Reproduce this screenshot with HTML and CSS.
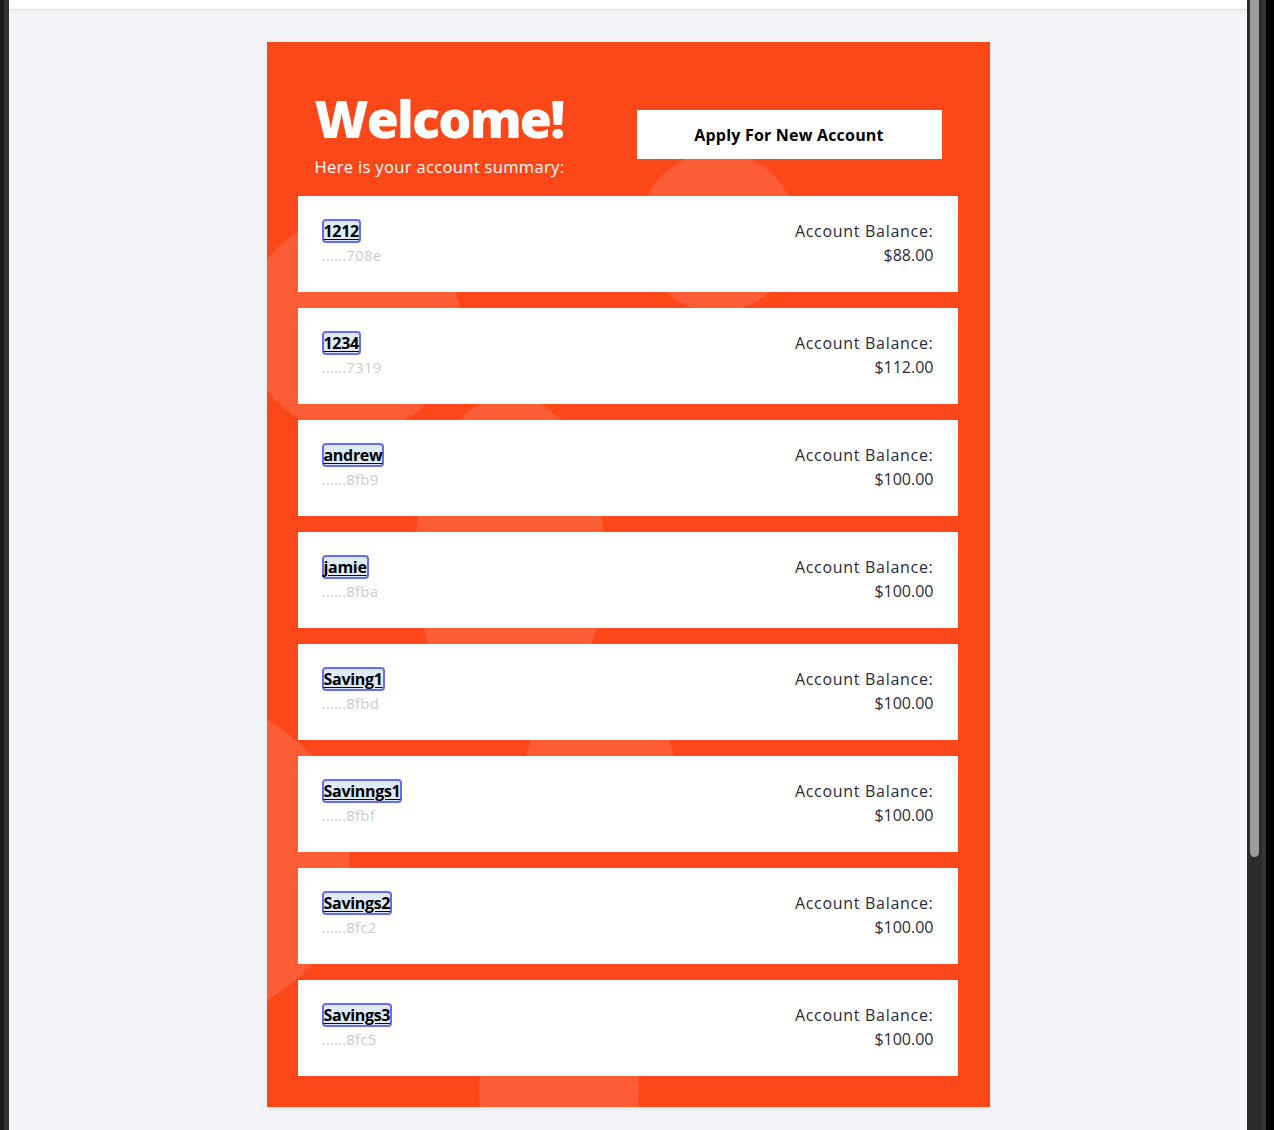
FILE: index.html
```html
<!DOCTYPE html>
<html lang="en">
<head>
<meta charset="utf-8">
<title>Account Summary</title>
<link rel="stylesheet" href="styles.css">
</head>
<body>
<div class="frame">
  <div class="edge-left"></div>
  <div class="viewport">
    <div class="topbar"></div>
    <main class="page">
      <section class="card">
        <div class="bubble bubble-a"></div>
        <div class="bubble bubble-b"></div>
        <div class="bubble bubble-c"></div>
        <div class="bubble bubble-d"></div>
        <div class="bubble bubble-btn"></div>
        <div class="bubble bubble-bottom"></div>

        <header class="card-head">
          <div class="intro">
            <h1 class="title">Welcome!</h1>
            <p class="subtitle">Here is your account summary:</p>
          </div>
          <button class="apply-btn" type="button">Apply For New Account</button>
        </header>

        <ul class="accounts">
          <li class="account">
            <div class="acc-left"><a class="acc-name" href="#">1212</a><span class="acc-id">......708e</span></div>
            <div class="acc-right"><span class="acc-label">Account Balance:</span><span class="acc-amount">$88.00</span></div>
          </li>
          <li class="account">
            <div class="acc-left"><a class="acc-name" href="#">1234</a><span class="acc-id">......7319</span></div>
            <div class="acc-right"><span class="acc-label">Account Balance:</span><span class="acc-amount">$112.00</span></div>
          </li>
          <li class="account">
            <div class="acc-left"><a class="acc-name" href="#">andrew</a><span class="acc-id">......8fb9</span></div>
            <div class="acc-right"><span class="acc-label">Account Balance:</span><span class="acc-amount">$100.00</span></div>
          </li>
          <li class="account">
            <div class="acc-left"><a class="acc-name" href="#">jamie</a><span class="acc-id">......8fba</span></div>
            <div class="acc-right"><span class="acc-label">Account Balance:</span><span class="acc-amount">$100.00</span></div>
          </li>
          <li class="account">
            <div class="acc-left"><a class="acc-name" href="#">Saving1</a><span class="acc-id">......8fbd</span></div>
            <div class="acc-right"><span class="acc-label">Account Balance:</span><span class="acc-amount">$100.00</span></div>
          </li>
          <li class="account">
            <div class="acc-left"><a class="acc-name" href="#">Savinngs1</a><span class="acc-id">......8fbf</span></div>
            <div class="acc-right"><span class="acc-label">Account Balance:</span><span class="acc-amount">$100.00</span></div>
          </li>
          <li class="account">
            <div class="acc-left"><a class="acc-name" href="#">Savings2</a><span class="acc-id">......8fc2</span></div>
            <div class="acc-right"><span class="acc-label">Account Balance:</span><span class="acc-amount">$100.00</span></div>
          </li>
          <li class="account">
            <div class="acc-left"><a class="acc-name" href="#">Savings3</a><span class="acc-id">......8fc5</span></div>
            <div class="acc-right"><span class="acc-label">Account Balance:</span><span class="acc-amount">$100.00</span></div>
          </li>
        </ul>
      </section>
    </main>
  </div>
  <div class="scrollbar"><div class="thumb"></div></div>
</div>
</body>
</html>
```

FILE: styles.css
```css
* { box-sizing: border-box; }

html, body {
  margin: 0;
  padding: 0;
  height: 100%;
}

body {
  font-family: "Open Sans", "Liberation Sans", sans-serif;
  background: #f4f5f9;
  overflow: hidden;
}

.frame {
  display: flex;
  width: 1274px;
  height: 1130px;
}

.edge-left {
  width: 9px;
  flex: 0 0 9px;
  background: linear-gradient(to right, #1b1b1b 0 4px, #343434 4px 9px);
}

.viewport {
  flex: 1;
  display: flex;
  flex-direction: column;
  background: #f4f5f9;
  min-width: 0;
}

.topbar {
  height: 10px;
  flex: 0 0 10px;
  background: #ffffff;
  border-bottom: 1px solid #e1e2e8;
  box-shadow: 0 2px 8px rgba(0, 0, 0, 0.03);
}

.page {
  display: flex;
  justify-content: center;
  padding-top: 32px;
}

.card {
  position: relative;
  overflow: hidden;
  width: 723px;
  background: #fc4719;
  padding: 0 32px 31px 31px;
  box-shadow: 0 2px 6px rgba(0, 0, 0, 0.08);
}

.bubble {
  position: absolute;
  border-radius: 50%;
  background: #fc5c36;
  z-index: 0;
}

.bubble-a { left: -22px; top: 175px; width: 216px; height: 216px; }
.bubble-b { left: 148px; top: 353px; width: 190px; height: 330px; }
.bubble-c { left: 258px; top: 653px; width: 150px; height: 150px; }
.bubble-d { left: -237px; top: 658px; width: 320px; height: 320px; }
.bubble-btn { left: 372px; top: 110px; width: 158px; height: 160px; }
.bubble-bottom { left: 212px; top: 968px; width: 160px; height: 160px; }

.card-head,
.accounts {
  position: relative;
  z-index: 1;
}

.card-head {
  display: flex;
  justify-content: space-between;
  align-items: flex-start;
  padding: 44px 16px 17px 17px;
}

.title {
  margin: 0;
  color: #ffffff;
  font-size: 52px;
  font-weight: 800;
  line-height: 64px;
  letter-spacing: -1.8px;
}

.subtitle {
  margin: 5px 0 0;
  color: #ffffff;
  font-size: 16.5px;
  line-height: 24px;
  letter-spacing: 0.35px;
}

.apply-btn {
  width: 305px;
  height: 49px;
  margin-top: 24px;
  border: none;
  border-radius: 0;
  background: #ffffff;
  color: #000000;
  font-family: inherit;
  font-size: 16px;
  font-weight: 700;
  letter-spacing: 0.2px;
  cursor: pointer;
}

.accounts {
  list-style: none;
  margin: 0;
  padding: 0;
  display: flex;
  flex-direction: column;
  gap: 16px;
}

.account {
  display: flex;
  justify-content: space-between;
  align-items: flex-start;
  height: 96px;
  background: #ffffff;
  padding: 23px 24px 0 24px;
}

.acc-left,
.acc-right {
  display: flex;
  flex-direction: column;
}

.acc-left { align-items: flex-start; }
.acc-right { align-items: flex-end; }

.acc-name {
  display: inline-block;
  height: 24px;
  line-height: 20px;
  padding: 0;
  border: 2px solid #6a6af8;
  border-radius: 4px;
  background: #dcebf6;
  color: #000000;
  font-size: 16px;
  font-weight: 700;
  text-decoration: underline;
  text-underline-offset: 2px;
  letter-spacing: -0.3px;
}

.acc-id {
  line-height: 24px;
  font-size: 15px;
  letter-spacing: 0.2px;
  color: #cdcdcd;
}

.acc-label,
.acc-amount {
  line-height: 24px;
  font-size: 16px;
  color: #2a2a36;
}

.acc-label { letter-spacing: 0.7px; }
.acc-amount { letter-spacing: 0; }

.scrollbar {
  position: relative;
  width: 27px;
  flex: 0 0 27px;
  background: linear-gradient(to right, #2b2b2b 0 15px, #363636 15px 19px, #000000 19px 27px);
}

.thumb {
  position: absolute;
  left: 3px;
  top: 0;
  width: 9px;
  height: 857px;
  background: #9b9b9b;
  border-radius: 0 0 5px 5px;
}
```
